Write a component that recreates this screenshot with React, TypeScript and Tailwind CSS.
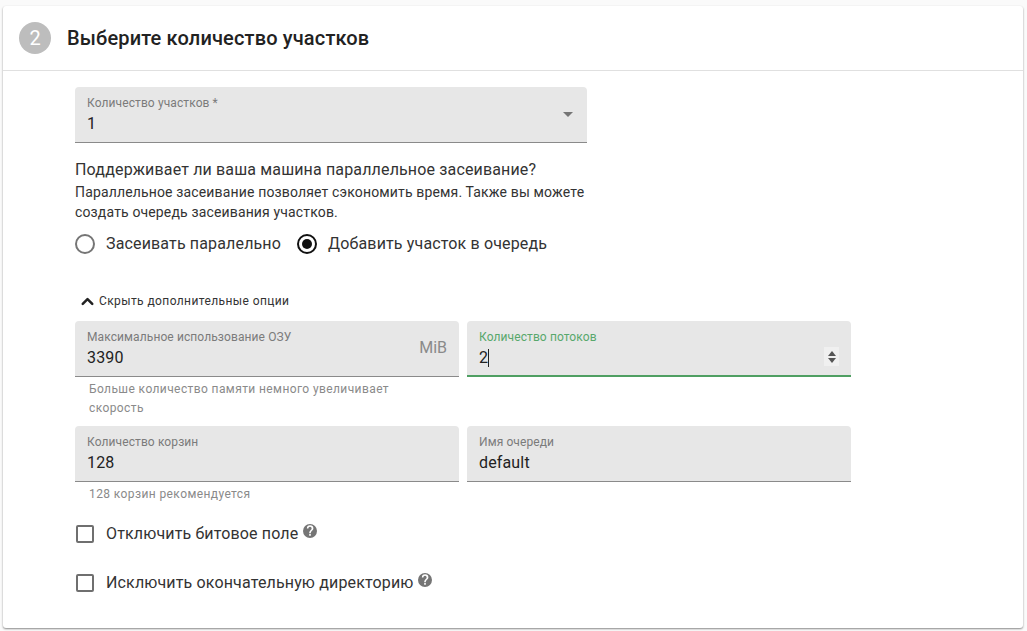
import { ChevronUp } from "lucide-react";

function Field({ label, value, focused, suffix, help, cursor, spinner }: {
  label: string;
  value: string;
  focused?: boolean;
  suffix?: string;
  help?: string[];
  cursor?: boolean;
  spinner?: boolean;
}) {
  return (
    <div className="w-[384px]">
      <div className={`relative h-14 rounded-t bg-[#e7e7e7] px-3 pt-[8px] ${focused ? "border-b-2 border-[#4f9f62]" : "border-b border-[#8a8a8a]"}`}>
        <div className={`text-xs leading-[16px] tracking-[0.1px] ${focused ? "text-[#58a86c]" : "text-[#7b7b7b]"}`}>{label}</div>
        <div className="mt-[2px] flex items-center text-base leading-[22px] tracking-[0.15px] text-[#222]">
          {value}
          {cursor && <span className="h-[18px] w-px bg-[#222]" />}
        </div>
        {suffix && <div className="absolute right-3 top-[16px] text-base leading-[22px] text-[#8a8a8a]">{suffix}</div>}
        {spinner && (
          <div className="absolute right-[12px] top-[26px] flex h-[19px] w-[15px] flex-col items-center justify-center gap-[2px] bg-[#f0f0f0]">
            <svg width="8" height="5" viewBox="0 0 8 5"><path d="M4 0l4 5H0z" fill="#555" /></svg>
            <svg width="8" height="5" viewBox="0 0 8 5"><path d="M4 5L0 0h8z" fill="#555" /></svg>
          </div>
        )}
      </div>
      {help && (
        <div className="px-[14px] pt-[3px] text-xs leading-[19px] tracking-[0.4px] text-[#8a8a8a]">
          {help.map((l) => <div key={l}>{l}</div>)}
        </div>
      )}
    </div>
  );
}

function Radio({ label, checked }: { label: string; checked?: boolean }) {
  return (
    <div className="flex items-center gap-[11px]">
      <div className={`flex h-5 w-5 items-center justify-center rounded-full border-2 ${checked ? "border-[#111]" : "border-[#757575]"}`}>
        {checked && <div className="h-[10px] w-[10px] rounded-full bg-[#111]" />}
      </div>
      <span className="text-base tracking-[0.15px] text-[#333]">{label}</span>
    </div>
  );
}

function Check({ label }: { label: string }) {
  return (
    <div className="flex h-[24px] items-center">
      <div className="h-[18px] w-[18px] rounded-[2px] border-2 border-[#6f6f6f]" />
      <span className="ml-[12px] text-base tracking-[0.15px] text-[#333]">{label}</span>
      <svg className="mb-[7px] ml-[5px]" width="14" height="14" viewBox="0 0 24 24">
        <path fill="#757575" d="M12 0a12 12 0 1 0 0 24 12 12 0 0 0 0-24zm1.4 20h-2.8v-2.8h2.8V20zm2.9-9.2l-1.3 1.3c-1 1-1.6 1.9-1.6 3.9h-2.8v-.7c0-1.500.6-2.900 1.600-3.900l1.800-1.800c.5-.5.8-1.200.8-2a2.800 2.800 0 0 0-5.600 0H6.600a5.600 5.600 0 0 1 11.200 0c0 1.200-.5 2.300-1.500 3.200z" />
      </svg>
    </div>
  );
}

export default function App() {
  return (
    <div className="h-[631px] w-[1027px] overflow-hidden bg-[#fafafa] px-[3px] pt-[6px] font-['Roboto',sans-serif]">
      <div className="h-[622px] w-[1020px] rounded-[3px] bg-white shadow-[0_1px_2px_rgba(0,0,0,0.45)]">
        <div className="flex h-[65px] items-center border-b border-[#e0e0e0] pl-[16px]">
          <div className="flex h-8 w-8 items-center justify-center rounded-full bg-[#bdbdbd] text-xl text-white">2</div>
          <div className="ml-4 text-xl font-medium tracking-[0.15px] text-[#222]">Выберите количество участков</div>
        </div>
        <div className="pl-[72px] pt-[16px]">
          <div className="relative h-14 w-[512px] rounded-t border-b border-[#8a8a8a] bg-[#e7e7e7] px-3 pt-[8px]">
            <div className="text-xs leading-[16px] tracking-[0.1px] text-[#7b7b7b]">Количество участков *</div>
            <div className="mt-[2px] text-base leading-[22px] text-[#222]">1</div>
            <div className="absolute right-[14px] top-[25px] h-0 w-0 border-x-[5px] border-t-[5px] border-x-transparent border-t-[#757575]" />
          </div>
          <div className="mt-[15px] text-base leading-[24px] tracking-[0.15px] text-[#333]">Поддерживает ли ваша машина параллельное засеивание?</div>
          <div className="w-[520px] text-sm leading-[20px] tracking-[0.15px] text-[#333]">
            Параллельное засеивание позволяет сэкономить время. Также вы можете создать очередь засеивания участков.
          </div>
          <div className="mt-[10px] flex h-[24px] gap-[16px]">
            <Radio label="Засеивать паралельно" />
            <Radio label="Добавить участок в очередь" checked />
          </div>
          <div className="mt-[33px] flex h-[24px] items-center pl-[3px] text-xs tracking-[0.4px] text-[#333]">
            <ChevronUp size={19} strokeWidth={3.2} className="text-[#222]" />
            <span className="ml-[2px]">Скрыть дополнительные опции</span>
          </div>
          <div className="mt-[8px] flex items-start gap-2">
            <Field label="Максимальное использование ОЗУ" value="3390" suffix="MiB" help={["Больше количество памяти немного увеличивает", "скорость"]} />
            <Field label="Количество потоков" value="2" focused cursor spinner />
          </div>
          <div className="mt-[8px] flex items-start gap-2">
            <Field label="Количество корзин" value="128" help={["128 корзин рекомендуется"]} />
            <Field label="Имя очереди" value="default" />
          </div>
          <div className="mt-[18px] flex flex-col gap-[25px] pl-px">
            <Check label="Отключить битовое поле" />
            <Check label="Исключить окончательную директорию" />
          </div>
        </div>
      </div>
    </div>
  );
}
